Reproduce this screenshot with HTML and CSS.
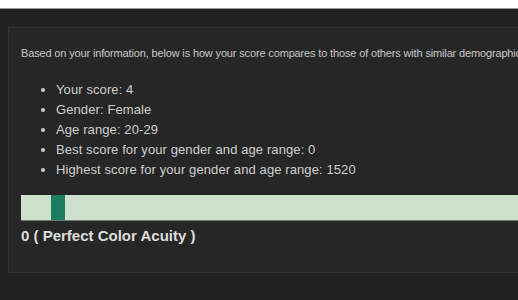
FILE: index.html
```html
<!DOCTYPE html>
<html>
  <head>
    <title>Your Results</title>
    <meta charset="utf-8" />
    <link rel="stylesheet" href="styles.css">
  </head>
  <body>
    <div class="topbar"></div>
    <div class="page">
      <div class="panel">
        <p class="intro">Based on your information, below is how your score compares to those of others with similar demographics.</p>
        <ul class="facts">
          <li>Your score: 4</li>
          <li>Gender: Female</li>
          <li>Age range: 20-29</li>
          <li>Best score for your gender and age range: 0</li>
          <li>Highest score for your gender and age range: 1520</li>
        </ul>
        <div class="bar">
          <div class="marker" style="margin-left: 30px"></div>
        </div>
        <div class="label">0 ( Perfect Color Acuity )</div>
      </div>
    </div>
  </body>
</html>
```

FILE: styles.css
```css
html, body {
  margin: 0;
  background: #222;
  overflow: hidden;
}
body {
  font-family: "Liberation Sans", Arial, sans-serif;
  color: #ccc;
  width: 518px;
  height: 300px;
}
.topbar {
  height: 8px;
  background: #fff;
  border-bottom: 1px solid #999;
}
.page {
  padding: 18px 0 0 8px;
}
.panel {
  width: 510px;
  height: 246px;
  background: #262626;
  border: 1px solid #333;
  border-right: none;
  padding: 0 0 0 12px;
  box-sizing: border-box;
  overflow: hidden;
}
.intro {
  margin: 19px 0 0;
  font-size: 11px;
  letter-spacing: -0.15px;
  white-space: nowrap;
  color: #c8c8c8;
}
.facts {
  margin: 21px 0 0;
  padding-left: 35px;
  font-size: 13px;
  letter-spacing: 0.1px;
  line-height: 20px;
  color: #cfcfcf;
}
.bar {
  margin-top: 15px;
  height: 26px;
  background: #cde0cb;
  border-bottom: 1px solid #6e7a6c;
  box-sizing: border-box;
  display: flex;
}
.marker {
  width: 14px;
  background: #1b7d62;
}
.label {
  margin-top: 6px;
  font-size: 15px;
  font-weight: bold;
  color: #ddd;
}
```
